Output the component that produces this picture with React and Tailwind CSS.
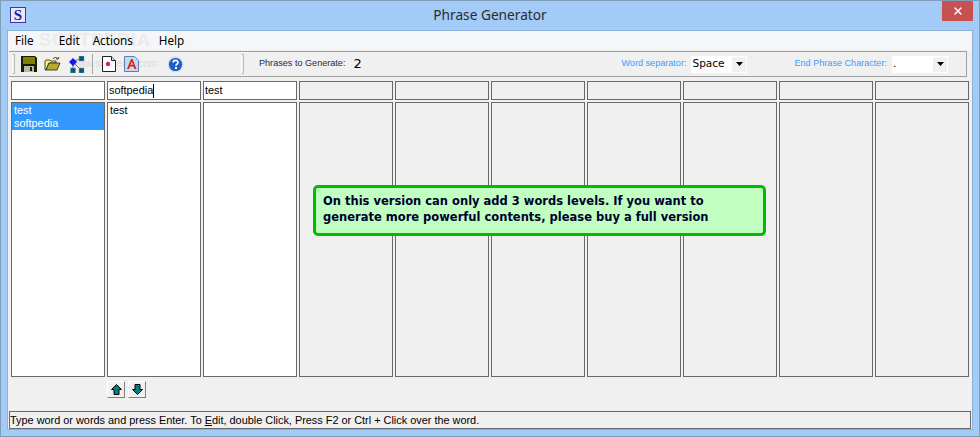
import { X } from "lucide-react";

const columns = [
  { word: "", items: ["test", "softpedia"], selected: true, active: true },
  { word: "softpedia", items: ["test"], active: true, caret: true },
  { word: "test", items: [], active: true },
  ...Array.from({ length: 7 }, () => ({ word: "", items: [] })),
];

const SaveIcon = () => (
  <svg width="16" height="16" viewBox="0 0 16 16">
    <path d="M0 0h14l2 2v14H0z" fill="#1c1c00" />
    <rect x="2" y="1" width="12" height="7" fill="#808000" />
    <rect x="3" y="10" width="10" height="6" fill="#b8b8a8" />
    <rect x="9" y="11" width="2" height="4" fill="#1c1c00" />
  </svg>
);

const OpenIcon = () => (
  <svg width="17" height="16" viewBox="0 0 17 16">
    <rect width="17" height="16" fill="#f3f2e2" />
    <path d="M1 14V5l1-1h4l1 1h5v2H5L2 14z" fill="#f8f080" stroke="#222" strokeWidth="0.8" />
    <path d="M2 14l3-7h11l-3 7z" fill="#b8a830" stroke="#222" strokeWidth="0.8" />
    <path d="M9 3c1-2 4-2 5 0M14 3l1-2M14 3l-2 0" fill="none" stroke="#222" strokeWidth="0.9" />
  </svg>
);

const TreeIcon = () => (
  <svg width="17" height="17" viewBox="0 0 17 17">
    <path d="M5 6L13 2M5 6l8 8M5 6v8" stroke="#555" strokeWidth="0.8" fill="none" />
    <path d="M5 2l4 4-4 4-4-4z" fill="#1414ff" />
    <rect x="11" y="0" width="5" height="5" fill="#15507a" stroke="#6aa" strokeWidth="0.5" />
    <rect x="11" y="12" width="5" height="5" fill="#15507a" stroke="#6aa" strokeWidth="0.5" />
    <rect x="2.5" y="12" width="5" height="5" fill="#15507a" stroke="#6aa" strokeWidth="0.5" />
  </svg>
);

const DocIcon = () => (
  <svg width="14" height="16" viewBox="0 0 14 16">
    <path d="M.5.5h9l4 4v11H.5z" fill="#fff" stroke="#222" />
    <path d="M9.5.5v4h4" fill="#ddd" stroke="#222" />
    <circle cx="6" cy="8" r="2.2" fill="#e0203c" />
  </svg>
);

const FontDocIcon = () => (
  <svg width="15" height="16" viewBox="0 0 15 16">
    <path d="M.5.5h10l4 4v11H.5z" fill="#c4d8f0" stroke="#5a7fb0" />
    <path d="M3 13L7 3h1.5l4 10h-2l-1-2.6H6L5 13zM6.6 8.8h2.4L7.8 5.6z" fill="#d8261c" />
  </svg>
);

const HelpIcon = () => (
  <svg width="17" height="17" viewBox="0 0 17 17">
    <circle cx="8.5" cy="8.5" r="8" fill="#d4dcec" />
    <circle cx="8.5" cy="8.5" r="6.6" fill="#1f5cc4" />
    <path d="M6.2 6.6c0-3 4.8-3 4.8-.2 0 1.800-2 1.800-2 3.400" fill="none" stroke="#fff" strokeWidth="1.700" />
    <rect x="8" y="11" width="2" height="2" fill="#fff" />
  </svg>
);

const Grip = () => <div className="w-[3px] h-[20px] border border-[#b8b8b8] border-l-white bg-[#f0f0f0]" />;

const Caret = () => (
  <svg width="7" height="4" viewBox="0 0 7 4">
    <path d="M0 0h7L3.500 4z" fill="#000" />
  </svg>
);

const ComboBox = ({ value }) => (
  <div className="w-[56px] h-[17px] bg-white flex items-center justify-between pl-px font-['DejaVu_Sans',sans-serif] text-[10.5px] text-black">
    <span>{value}</span>
    <div className="w-[14px] h-[15px] mr-px bg-[#f0f0f0] flex items-center justify-center">
      <Caret />
    </div>
  </div>
);

const ArrowButton = ({ up }) => (
  <div className="w-[18px] h-[17px] bg-[#f0f0f0] border border-white border-r-[#808080] border-b-[#808080] flex items-center justify-center">
    <svg width="11" height="11" viewBox="0 0 11 11">
      <path
        d={up ? "M5.500 .5L10.500 5.500H8V10.500H3V5.500H.5z" : "M5.500 10.500L10.500 5.500H8V.5H3V5.500H.5z"}
        fill="#008080"
        stroke="#000"
      />
    </svg>
  </div>
);

const Column = ({ col }) => (
  <div className="w-[94px] flex flex-col gap-[2px]">
    <div className={`h-[19px] border border-[#696969] pl-px leading-[17px] text-[10.9px] text-black flex items-center ${col.active ? "bg-white" : "bg-[#f0f0f0]"}`}>
      {col.word}
      {col.caret && <span className="w-px h-[14px] bg-black" />}
    </div>
    <div className={`h-[275px] border border-[#696969] ${col.active ? "bg-white" : "bg-[#f0f0f0]"}`}>
      <div className={`pl-[2px] pt-px leading-[13px] text-[10.9px] ${col.selected ? "bg-[#3399ff] text-white" : "text-black"}`}>
        {col.items.map((item) => (
          <div key={item}>{item}</div>
        ))}
      </div>
    </div>
  </div>
);

export default function App() {
  return (
    <div className="relative w-[980px] h-[437px] flex flex-col border border-[#7f9db9] bg-[#a3cbf7] font-['Liberation_Sans',sans-serif] overflow-hidden">
      <div className="relative h-[29px] shrink-0 flex items-center justify-center">
        <div className="absolute left-[9px] top-[6px] w-[16px] h-[16px] bg-[#e8e8f8] border border-[#3838a8] flex items-center justify-center font-['Liberation_Serif',serif] font-bold text-[15px] leading-none text-[#20209c]">
          S
        </div>
        <span className="font-['Noto_Sans',sans-serif] text-[13.7px] text-[#2b2b2b]">Phrase Generator</span>
        <div className="absolute right-[6px] top-0 w-[31px] h-[20px] bg-[#c75050] flex items-center justify-center">
          <X size={12} strokeWidth={3} color="#fff" />
        </div>
      </div>

      <div className="relative flex-1 mx-[6px] mb-[6px] border border-[#8fb0d8] bg-[#f0f0f0] flex flex-col">
        <div className="relative h-[19px] shrink-0 bg-[#f5f6f7] flex items-center pl-[7px] gap-[15px] font-['Noto_Sans',sans-serif] text-[11.7px] text-black">
          <span className="absolute left-[31px] top-0 font-['Liberation_Sans',sans-serif] font-bold text-[18px] leading-[19px] text-[#ebebed] tracking-[1px]">SOFTPEDIA</span>
          <span className="relative">File</span>
          <span className="relative ml-[10px]">Edit</span>
          <span className="relative -ml-[2px]">Actions</span>
          <span className="relative ml-[11px]">Help</span>
        </div>

        <div className="relative h-[26px] shrink-0 mt-[1px] ml-px w-[958px] border border-[#a0a0a0] border-l-0 flex items-center pl-[3px] text-[9.1px]">
          <span className="absolute left-[62px] top-[4px] text-[10px] text-[#dcdcdc]">www.softpedia.com</span>
          <Grip />
          <div className="relative ml-[6px] flex items-center">
            <SaveIcon />
          </div>
          <div className="relative ml-[7px]"><OpenIcon /></div>
          <div className="relative ml-[7px]"><TreeIcon /></div>
          <div className="relative ml-[7px] w-px h-[20px] bg-[#a8a8a8]" />
          <div className="relative ml-[9px]"><DocIcon /></div>
          <div className="relative ml-[8px]"><FontDocIcon /></div>
          <div className="relative ml-[28px]"><HelpIcon /></div>
          <div className="ml-[57px]"><Grip /></div>
          <span className="ml-[15px] text-[#2a2a3a] whitespace-nowrap">Phrases to Generate:</span>
          <span className="ml-[8px] font-['DejaVu_Sans',sans-serif] text-[13px] text-black">2</span>
          <span className="ml-auto text-[#3d9bff] whitespace-nowrap">Word separator:</span>
          <div className="ml-[5px]"><ComboBox value="Space" /></div>
          <span className="ml-[47px] text-[#3d9bff] whitespace-nowrap">End Phrase Character:</span>
          <div className="ml-[5px] mr-[18px]"><ComboBox value="." /></div>
        </div>

        <div className="flex gap-[2px] pl-[3px] mt-[4px]">
          {columns.map((col, i) => (
            <Column key={i} col={col} />
          ))}
        </div>

        <div className="flex gap-[3px] ml-[99px] mt-[4px]">
          <ArrowButton up />
          <ArrowButton />
        </div>

        <div className="h-[18px] mt-[13px] ml-px w-[962px] border border-[#696969] flex items-center text-[10.9px] text-black whitespace-nowrap">
          <span>Type word or words and press Enter. To <u>E</u>dit, double Click, Press F2 or Ctrl + Click over the word.</span>
        </div>

        <div className="absolute left-[305px] top-[154px] w-[453px] h-[51px] rounded-[5px] border-[3px] border-[#00bb00] bg-[#c0ffc0] pl-[7px] pt-[5px] font-['DejaVu_Sans',sans-serif] font-bold text-[11.5px] leading-[16px] text-[#000030]">
          On this version can only add 3 words levels. If you want to
          <br />
          generate more powerful contents, please buy a full version
        </div>
      </div>
    </div>
  );
}
